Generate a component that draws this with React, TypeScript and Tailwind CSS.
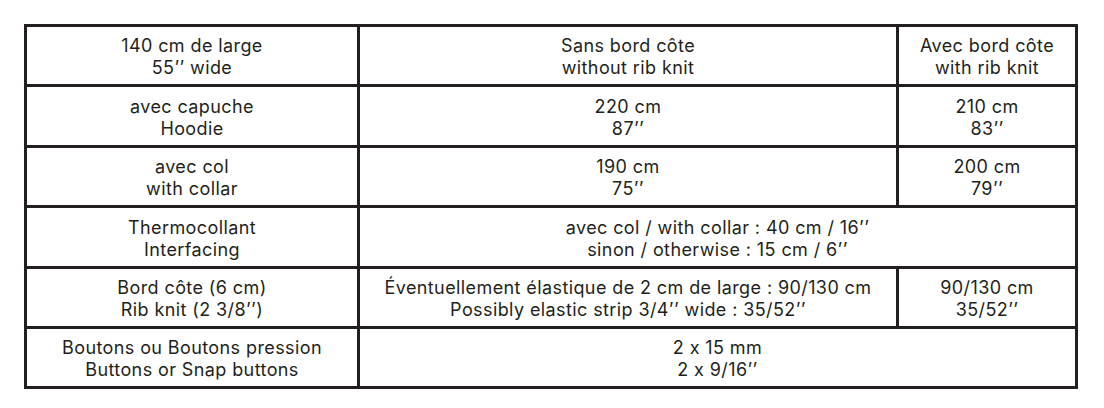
import React from 'react';

type Cell = { lines: string[]; span?: number };

const rows: Cell[][] = [
  [
    { lines: ['140 cm de large', '55’’ wide'] },
    { lines: ['Sans bord côte', 'without rib knit'] },
    { lines: ['Avec bord côte', 'with rib knit'] },
  ],
  [
    { lines: ['avec capuche', 'Hoodie'] },
    { lines: ['220 cm', '87’’'] },
    { lines: ['210 cm', '83’’'] },
  ],
  [
    { lines: ['avec col', 'with collar'] },
    { lines: ['190 cm', '75’’'] },
    { lines: ['200 cm', '79’’'] },
  ],
  [
    { lines: ['Thermocollant', 'Interfacing'] },
    { lines: ['avec col / with collar : 40 cm / 16’’', 'sinon / otherwise : 15 cm / 6’’'], span: 2 },
  ],
  [
    { lines: ['Bord côte (6 cm)', 'Rib knit (2 3/8’’)'] },
    {
      lines: [
        'Éventuellement élastique de 2 cm de large : 90/130 cm',
        'Possibly elastic strip 3/4’’ wide : 35/52’’',
      ],
    },
    { lines: ['90/130 cm', '35/52’’'] },
  ],
  [
    { lines: ['Boutons ou Boutons pression', 'Buttons or Snap buttons'] },
    { lines: ['2 x 15 mm', '2 x 9/16’’'], span: 2 },
  ],
];

const App = () => {
  return (
    <div className="w-[1104px] h-[408px] bg-white pt-[24px] pl-[24px]">
      <div className="grid grid-cols-[330px_536px_176px] grid-rows-[57px_58px_57px_58px_57px_57px] gap-[3px] p-[3px] bg-[#231f20] w-[1054px] text-[#231f20] text-[18px] leading-[22px] tracking-[0.4px] font-['Inter','Liberation_Sans',sans-serif] [font-feature-settings:'calt'_0]">
        {rows.map((row, r) =>
          row.map((cell, c) => (
            <div
              key={`${r}-${c}`}
              className={`bg-white flex flex-col items-center justify-center pt-[3px] ${cell.span === 2 ? 'col-span-2' : ''}`}
            >
              {cell.lines.map((line, i) => (
                <span key={i} className="whitespace-nowrap">
                  {line}
                </span>
              ))}
            </div>
          ))
        )}
      </div>
    </div>
  );
};

export default App;
